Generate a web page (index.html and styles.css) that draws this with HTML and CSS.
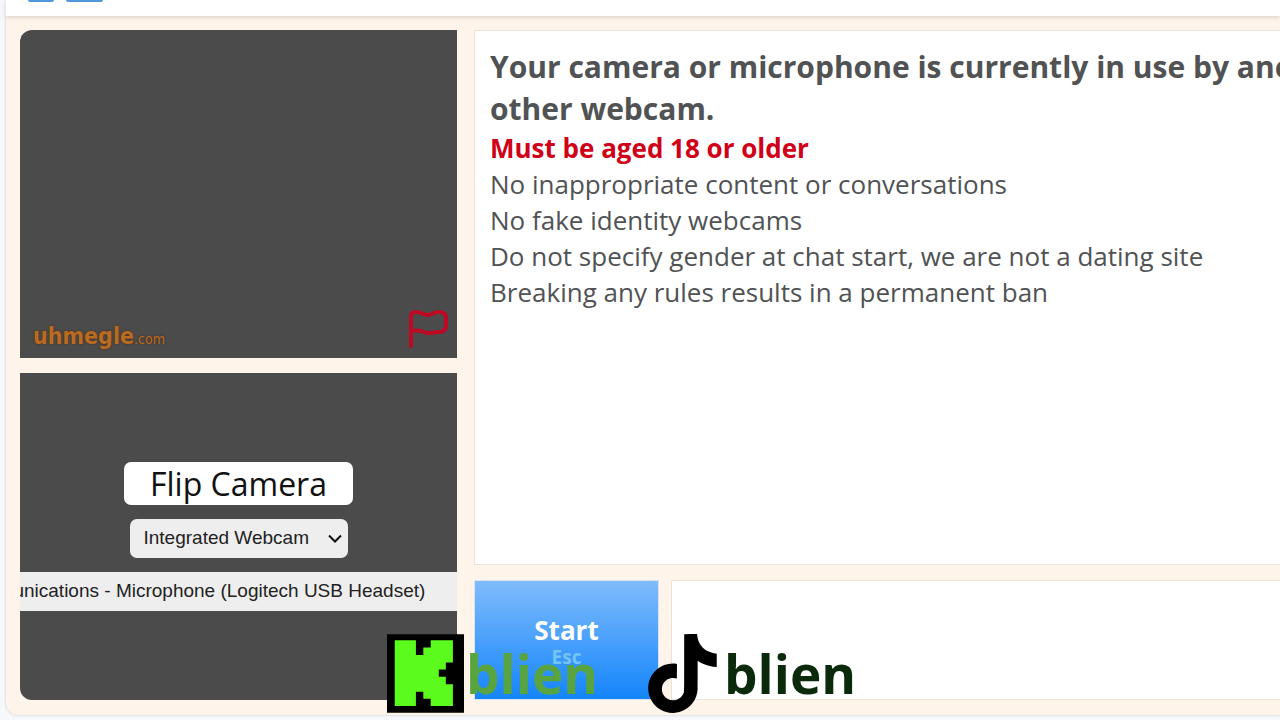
FILE: index.html
```html
<!DOCTYPE html>
<html lang="en">
<head>
<meta charset="utf-8">
<meta name="viewport" content="width=device-width, initial-scale=1">
<title>Uhmegle</title>
<link rel="stylesheet" href="styles.css">
</head>
<body>
<div class="app">
  <header class="topbar">
    <span class="share share-small"></span>
    <span class="share share-wide"></span>
  </header>
  <main class="room">
    <section class="videos">
      <div class="video video-remote">
        <span class="brand">uhmegle<span class="brand-tld">.com</span></span>
        <button class="report" type="button" aria-label="Report">
          <svg viewBox="0 0 40 40" width="40" height="40" fill="none" stroke="#bd0924" stroke-width="4" stroke-linecap="round" stroke-linejoin="round"><path d="M3 37V7Q3 3 8 3C14 3 15 6 20 6S25 3 31 3Q38 3 38 9V16Q38 23 31 23C26 23 25 24 20 24S13 20 3 22"/></svg>
        </button>
      </div>
      <div class="video video-local">
        <button class="flip" type="button">Flip Camera</button>
        <div class="picker">
          <select class="device" aria-label="Camera"><option>Integrated Webcam</option></select>
          <svg class="chevron" viewBox="0 0 14 9" width="14" height="9" fill="none" stroke="#111" stroke-width="2"><path d="M1 1.5l6 6 6-6"/></svg>
        </div>
        <select class="device device-mic" aria-label="Microphone"><option>Communications - Microphone (Logitech USB Headset)</option></select>
      </div>
    </section>
    <section class="chat">
      <div class="log">
        <p class="notice">Your camera or microphone is currently in use by another<br>other webcam.</p>
        <p class="rule rule-age">Must be aged 18 or older</p>
        <p class="rule">No inappropriate content or conversations</p>
        <p class="rule">No fake identity webcams</p>
        <p class="rule">Do not specify gender at chat start, we are not a dating site</p>
        <p class="rule">Breaking any rules results in a permanent ban</p>
      </div>
      <div class="controls">
        <button class="start" type="button">Start<span class="start-key">Esc</span></button>
        <textarea class="message" aria-label="Message"></textarea>
      </div>
    </section>
  </main>
</div>
<div class="socials">
  <div class="social social-kick">
    <svg viewBox="0 0 229 234" width="77" height="79"><path fill="#000" d="M0 0H229V234H0z"/><path fill="#5bfb1d" d="M23 18H86V62H108V40H130V18H196V84H175V105H154V127H175V149H196V214H130V192H108V171H86V214H23z"/></svg>
    <span>blien</span>
  </div>
  <div class="social social-tiktok">
    <svg viewBox="1.5 0 21 24" width="69" height="79"><path d="M12.525.02c1.31-.02 2.61-.01 3.91-.02.08 1.53.63 3.09 1.75 4.17 1.12 1.11 2.7 1.62 4.24 1.79v4.03c-1.44-.05-2.89-.35-4.2-.97-.57-.26-1.1-.59-1.62-.93-.01 2.92.01 5.84-.02 8.75-.08 1.4-.54 2.79-1.35 3.94-1.31 1.92-3.58 3.17-5.91 3.21-1.43.08-2.86-.31-4.08-1.03-2.02-1.19-3.44-3.37-3.65-5.71-.02-.5-.03-1-.01-1.49.18-1.9 1.12-3.72 2.58-4.96 1.66-1.44 3.98-2.13 6.15-1.72.02 1.48-.04 2.96-.04 4.44-.99-.32-2.15-.23-3.02.37-.63.41-1.11 1.04-1.36 1.75-.21.51-.15 1.07-.14 1.61.24 1.64 1.82 3.02 3.5 2.87 1.12-.01 2.19-.66 2.77-1.61.19-.33.4-.67.41-1.06.1-1.79.06-3.57.07-5.36.01-4.03-.01-8.05.02-12.07z"/></svg>
    <span>blien</span>
  </div>
</div>
</body>
</html>
```
FILE: styles.css
```css
* {
  box-sizing: border-box;
}

body {
  margin: 0;
  background: #f6f8fb;
  color: #505254;
  font-family: "Open Sans", "Noto Sans", sans-serif;
  overflow: hidden;
}

button,
select,
textarea {
  margin: 0;
  border: 0;
  font-family: inherit;
}

.app {
  display: flex;
  flex-direction: column;
  height: 100vh;
  padding: 0 0 5px 6px;
}

.topbar {
  position: relative;
  display: flex;
  gap: 12px;
  height: 16px;
  padding-left: 22px;
  background: #fff;
  box-shadow: 0 1px 5px rgba(60, 50, 40, 0.2);
}

.share {
  height: 2px;
  border-radius: 0 0 2px 2px;
  background: #5097da;
}

.share-small {
  width: 26px;
}

.share-wide {
  width: 37px;
}

.room {
  display: grid;
  flex: 1;
  grid-template-columns: 437px minmax(0, 1fr);
  gap: 17px;
  min-height: 0;
  padding: 14px 0 15px 14px;
  border-radius: 0 0 0 12px;
  background: #fef4ea;
  box-shadow: 0 0 3px rgba(0, 0, 0, 0.2);
}

.videos {
  display: grid;
  grid-template-rows: 1fr 1fr;
  gap: 15px;
  min-height: 0;
}

.video {
  display: flex;
  min-height: 0;
  overflow: hidden;
  background: #4b4b4b;
}

.video-remote {
  align-items: flex-end;
  justify-content: space-between;
  padding: 10px 9px 9px 13px;
  border-radius: 12px 0 0 0;
}

.video-local {
  flex-direction: column;
  align-items: center;
  justify-content: center;
  border-radius: 0 0 0 12px;
}

.brand {
  color: #b96b22;
  font-family: "DejaVu Sans Condensed", "DejaVu Sans", sans-serif;
  font-size: 23px;
  font-weight: bold;
  line-height: 20px;
  text-shadow: 0 0 2px #4a2508;
}

.brand-tld {
  font-size: 14px;
  font-weight: normal;
}

.report {
  display: flex;
  padding: 0;
  background: none;
}

.flip {
  height: 43px;
  padding: 0 26px;
  border-radius: 7px;
  background: #fff;
  color: #111;
  font-size: 32px;
  line-height: 43px;
}

.picker {
  position: relative;
  margin: 14px 0;
}

.device {
  display: block;
  height: 39px;
  padding: 0 38px 1px 14px;
  border-radius: 7px;
  appearance: none;
  background: #eee;
  color: #222;
  font-family: "Liberation Sans", Arial, sans-serif;
  font-size: 19px;
}

.chevron {
  position: absolute;
  top: 15px;
  right: 6px;
  pointer-events: none;
}

.device-mic {
  flex-shrink: 0;
  padding-right: 108px;
}

.chat {
  display: grid;
  grid-template-rows: minmax(0, 1fr) 120px;
  gap: 15px;
  min-height: 0;
}

.log {
  padding: 15px 0 0 15px;
  overflow: hidden;
  border: 1px solid #ece2db;
  border-right: 0;
  background: #fff;
  white-space: nowrap;
}

.notice,
.rule {
  margin: 0;
}

.notice {
  font-size: 30px;
  font-weight: bold;
  line-height: 42px;
}

.rule {
  font-size: 26px;
  line-height: 36px;
}

.rule-age {
  color: #d00018;
  font-weight: bold;
}

.controls {
  display: grid;
  grid-template-columns: 185px minmax(0, 1fr);
  gap: 12px;
}

.start {
  display: flex;
  flex-direction: column;
  align-items: center;
  justify-content: center;
  padding: 4px 0 0;
  border: 1px solid #d9e2ee;
  background: linear-gradient(#7fbcfc, #1485fb);
  color: #fff;
  font-size: 26px;
  font-weight: bold;
  line-height: 30px;
}

.start-key {
  color: #74c5f2;
  font-size: 19px;
  line-height: 24px;
}

.message {
  width: 100%;
  height: 100%;
  padding: 14px;
  border: 1px solid #ece2db;
  border-right: 0;
  background: #fff;
  font-size: 26px;
  resize: none;
}

.socials {
  position: absolute;
  bottom: 7px;
  left: 387px;
  display: flex;
  gap: 50px;
  font-size: 53px;
  font-weight: bold;
  line-height: 79px;
  pointer-events: none;
}

.social {
  display: flex;
}

.social-kick {
  gap: 2px;
  color: #58a441;
}

.social-tiktok {
  gap: 7px;
  color: #0b2a0c;
}
```
